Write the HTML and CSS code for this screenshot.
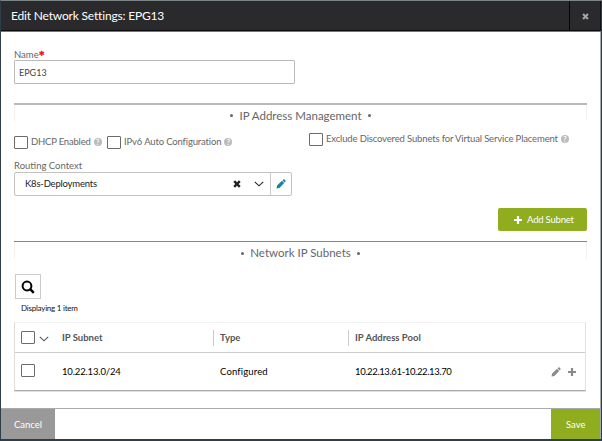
FILE: index.html
```html
<!DOCTYPE html>
<html lang="en">
<head>
<meta charset="utf-8">
<title>Edit Network Settings</title>
<link rel="stylesheet" href="styles.css">
</head>
<body>
<svg class="defs" width="0" height="0">
  <symbol id="x" viewBox="0 0 8 8"><path d="M1.2 1.2 6.8 6.8M6.8 1.2 1.2 6.8" fill="none" stroke="currentColor" stroke-width="2.4"/></symbol>
  <symbol id="down" viewBox="0 0 10 6"><path d="M.8.8 5 4.8 9.2.8" fill="none" stroke="currentColor" stroke-width="1.1"/></symbol>
  <symbol id="plus" viewBox="0 0 8 8"><path d="M4 0v8M0 4h8" fill="none" stroke="currentColor" stroke-width="2.2"/></symbol>
  <symbol id="pencil" viewBox="0 0 10 10"><path d="M.5 9.5 1.1 6.6 6 1.8 8.2 4 3.4 8.9ZM6.5 1.3 7.4.5Q8 .1 8.6.6L9.4 1.4Q9.9 2 9.5 2.6L8.7 3.5Z" fill="currentColor"/></symbol>
</svg>
<div class="window">
  <header class="header">
    <h1 class="title"><span>Edit Network Settings: EPG13</span></h1>
    <div class="close"><svg width="7" height="7"><use href="#x"/></svg></div>
  </header>
  <main class="content">
    <div class="label name-label"><span>Name</span><b class="required">*</b></div>
    <div class="input"><span>EPG13</span></div>

    <h2 class="section first"><i class="dot"></i><span>IP Address Management</span><i class="dot"></i></h2>
    <div class="options">
      <div class="option dhcp"><i class="box"></i><span class="t-dhcp">DHCP Enabled</span><em class="help">?</em></div>
      <div class="option ipv6"><i class="box"></i><span class="t-ipv6">IPv6 Auto Configuration</span><em class="help">?</em></div>
      <div class="option exclude"><i class="box"></i><span class="t-exclude">Exclude Discovered Subnets for Virtual Service Placement</span><em class="help">?</em></div>
    </div>
    <div class="label routing"><span>Routing Context</span></div>
    <div class="select">
      <span class="value">K8s-Deployments</span>
      <svg class="clear" width="8" height="8"><use href="#x"/></svg>
      <svg class="arrow" width="10" height="6"><use href="#down"/></svg>
      <div class="edit"><svg width="10" height="10"><use href="#pencil"/></svg></div>
    </div>
    <div class="actions"><div class="add"><svg width="8" height="8"><use href="#plus"/></svg><span>Add Subnet</span></div></div>

    <h2 class="section second"><i class="dot"></i><span>Network IP Subnets</span><i class="dot"></i></h2>
    <div class="search"><svg width="14" height="14" viewBox="0 0 14 14"><circle cx="6" cy="6" r="4.4" fill="none" stroke="#000" stroke-width="2"/><path d="m9.2 9.2 3.6 3.6" stroke="#000" stroke-width="2.4"/></svg></div>
    <div class="count"><span>Displaying 1 item</span></div>
    <div class="table">
      <div class="row head">
        <div class="check"><i class="box"></i><svg width="10" height="6"><use href="#down"/></svg></div>
        <div class="cell"><span>IP Subnet</span></div>
        <div class="cell line"><span>Type</span></div>
        <div class="cell line"><span>IP Address Pool</span></div>
      </div>
      <div class="row data">
        <div class="check"><i class="box"></i></div>
        <div class="cell"><span class="d-subnet">10.22.13.0/24</span></div>
        <div class="cell"><span class="d-type">Configured</span></div>
        <div class="cell"><span class="d-pool">10.22.13.61-10.22.13.70</span></div>
        <div class="tools"><svg width="10" height="10"><use href="#pencil"/></svg><svg width="8" height="8"><use href="#plus"/></svg></div>
      </div>
    </div>
  </main>
  <footer class="footer">
    <div class="cancel"><span>Cancel</span></div>
    <div class="save"><span>Save</span></div>
  </footer>
</div>
</body>
</html>
```
FILE: styles.css
```css
* { box-sizing: border-box; }
body { margin: 0; background: #fff; font-family: Lato, sans-serif; font-size: 9.5px; line-height: 12px; color: #555; }
span { white-space: nowrap; }
svg { display: block; flex: none; }
.defs { position: absolute; }
.window { width: 602px; height: 441px; display: flex; flex-direction: column; border: solid #2f3d48; border-width: 1px 1px 2px; border-top-color: #7c8585; }
.header { height: 31px; flex: none; display: flex; background: #2a2a2c; border-bottom: 1px solid #777; box-shadow: inset 0 -1px #0c0c0c; }
.title { margin: 0; flex: 1; padding: 7px 0 0 10px; font-size: 12px; line-height: 16px; font-weight: 400; color: #fff; letter-spacing: -.18px; }
.close { width: 32px; border-left: 1px solid #050505; border-right: 1px solid #111; display: flex; align-items: center; justify-content: center; color: #a4a4ac; }
.content { flex: 1; border-right: 1px solid #a5a9ac; padding: 17px 13px 0 13px; }
.label { height: 12px; color: #666; }
.name-label { height: 11px; display: flex; }
.required { color: #f00; font-size: 14px; line-height: 14px; margin-left: 0; -webkit-text-stroke: .4px #f00; }
.input { width: 281px; height: 24px; border: 1px solid #bbb; border-radius: 1px; padding: 6px 4px 0; line-height: 12px; font-size: 9px; color: #444; }
.section { margin: 0; height: 18px; border-top: 2px solid #b9b9b9; display: flex; justify-content: center; align-items: center; gap: 6px; font-size: 11.5px; line-height: 14px; padding-top: 5px; font-weight: 400; color: #666; box-shadow: inset 1px 0 #f2f2f2, inset -1px 0 #f2f2f2; }
.section.first { margin-top: 19px; }
.section.second { margin-top: 10px; border-top: 1px solid #858585; }
.dot { width: 3px; height: 3px; border-radius: 50%; background: #666; }
.options { display: flex; height: 39px; padding-top: 11px; color: #666; }
.option { display: flex; align-items: center; height: 14px; }
.dhcp { width: 93px; margin-top: 3px; }
.ipv6 { width: 202px; margin-top: 3px; }
.t-dhcp { letter-spacing: -.2px; }
.t-ipv6 { letter-spacing: -.15px; }
.t-exclude { letter-spacing: -.15px; }
.box { width: 14px; height: 13px; border: 1px solid #6b6b6b; border-radius: 1px; flex: none; margin-right: 3px; }
.help { width: 8px; height: 8px; border-radius: 50%; background: #bbb; color: #fff; font: bold 7px/8px Lato, sans-serif; text-align: center; margin-left: 3px; flex: none; }
.select { width: 278px; height: 24px; border: 1px solid #c2c2c2; border-radius: 2px; display: flex; align-items: center; color: #222; }
.value { width: 208px; padding-left: 10px; letter-spacing: -.2px; }
.arrow { margin-left: 13px; }
.edit { margin-left: auto; width: 21px; height: 100%; border-left: 1px solid #ccc; display: flex; align-items: center; justify-content: center; color: #1c7fa8; }
.clear { margin-left: 10px; }
.actions { display: flex; justify-content: flex-end; padding-top: 12px; }
.add { width: 89px; height: 23px; border-radius: 2px; background: #8fad1e; color: #fff; display: flex; align-items: center; padding-left: 16px; gap: 5px; letter-spacing: -.2px; }
.search { width: 26px; height: 25px; margin: 15px 0 0 1px; border: 1px solid #ccc; display: flex; align-items: center; justify-content: center; }
.count { height: 23px; padding: 3px 0 0 7px; font-size: 8px; line-height: 12px; color: #111; letter-spacing: -.23px; }
.table { width: 572px; height: 69px; border-left: 1px solid #ddd; border-right: 1px solid #e2e2e2; border-top: 1px solid #f3f3f3; border-bottom: 1px solid #aaa; box-shadow: 0 1px #e0e0e0; }
.row { display: grid; grid-template-columns: 46px 152px 135px 1fr 34px; align-items: center; }
.head { height: 30px; border-bottom: 1px solid #ccc; font-weight: 700; color: #555; }
.data { height: 37px; color: #000; }
.check { display: flex; align-items: center; padding-left: 6px; }
.data .check { padding-bottom: 2px; }
.check svg { margin: 2px 0 0 1px; }
.cell { height: 16px; line-height: 16px; padding-left: 1px; }
.head .cell + .cell { padding-left: 6px; }
.data .cell + .cell { padding-left: 7px; }
.line { border-left: 1px solid #ccc; }
.d-subnet { letter-spacing: -.15px; }
.d-type { letter-spacing: .15px; }
.d-pool { letter-spacing: -.38px; }
.tools { display: flex; align-items: center; gap: 7px; color: #8a8a8a; }
.footer { height: 31px; flex: none; display: flex; justify-content: space-between; border-top: 1px solid #aaa; border-right: 1px solid #a5a9ac; color: #fff; line-height: 31px; }
.cancel { width: 54px; background: #999; padding-left: 13px; }
.save { width: 49px; background: #8fad1e; padding-left: 15px; }
```
